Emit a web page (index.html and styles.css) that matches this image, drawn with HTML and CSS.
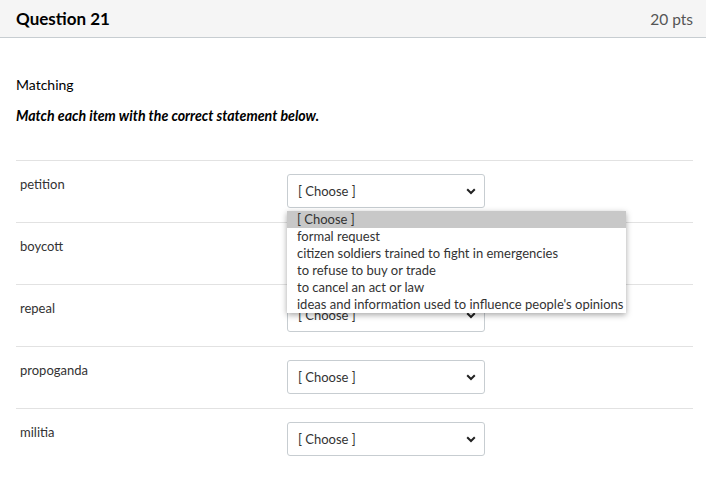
FILE: index.html
```html
<!DOCTYPE html>
<html>
<head>
<meta charset="utf-8">
<link rel="stylesheet" href="styles.css">
</head>
<body>
<div class="header">
  <h2 class="title">Question 21</h2>
  <span class="pts">20 pts</span>
</div>
<div class="content">
  <p class="kind">Matching</p>
  <p class="instr">Match each item with the correct statement below.</p>
  <div class="rows">
    <div class="row">
      <div class="label">petition</div>
      <div class="selwrap">
        <div class="select"><span>[ Choose ]</span><svg class="chev" width="10" height="7" viewBox="0 0 10 7"><path d="M1.2 1.3 L5 5 L8.8 1.3" fill="none" stroke="#222" stroke-width="2"/></svg></div>
        <ul class="menu">
          <li class="hl">[ Choose ]</li>
          <li>formal request</li>
          <li>citizen soldiers trained to fight in emergencies</li>
          <li>to refuse to buy or trade</li>
          <li>to cancel an act or law</li>
          <li>ideas and information used to influence people's opinions</li>
        </ul>
      </div>
    </div>
    <div class="row">
      <div class="label">boycott</div>
      <div class="selwrap">
        <div class="select"><span>[ Choose ]</span><svg class="chev" width="10" height="7" viewBox="0 0 10 7"><path d="M1.2 1.3 L5 5 L8.8 1.3" fill="none" stroke="#222" stroke-width="2"/></svg></div>
      </div>
    </div>
    <div class="row">
      <div class="label">repeal</div>
      <div class="selwrap">
        <div class="select"><span>[ Choose ]</span><svg class="chev" width="10" height="7" viewBox="0 0 10 7"><path d="M1.2 1.3 L5 5 L8.8 1.3" fill="none" stroke="#222" stroke-width="2"/></svg></div>
      </div>
    </div>
    <div class="row">
      <div class="label">propoganda</div>
      <div class="selwrap">
        <div class="select"><span>[ Choose ]</span><svg class="chev" width="10" height="7" viewBox="0 0 10 7"><path d="M1.2 1.3 L5 5 L8.8 1.3" fill="none" stroke="#222" stroke-width="2"/></svg></div>
      </div>
    </div>
    <div class="row">
      <div class="label">militia</div>
      <div class="selwrap">
        <div class="select"><span>[ Choose ]</span><svg class="chev" width="10" height="7" viewBox="0 0 10 7"><path d="M1.2 1.3 L5 5 L8.8 1.3" fill="none" stroke="#222" stroke-width="2"/></svg></div>
      </div>
    </div>
  </div>
</div>
</body>
</html>
```

FILE: styles.css
```css
* { box-sizing: border-box; }
body {
  margin: 0;
  font-family: Lato, "Open Sans", sans-serif;
  color: #2d3b45;
  background: #fff;
}
.header {
  height: 38px;
  background: #f5f5f5;
  border-bottom: 1px solid #c7cdd1;
  display: flex;
  justify-content: space-between;
  align-items: center;
  padding: 0 13px 0 16px;
}
.title {
  margin: 0;
  font-size: 17px;
  font-weight: 700;
  color: #000;
  line-height: 20px;
}
.pts {
  font-size: 15.5px;
  color: #555;
}
.content {
  padding: 0 13px 0 16px;
}
.kind {
  margin: 37px 0 0;
  font-size: 14px;
  line-height: 20px;
  color: #000;
}
.instr {
  margin: 11px 0 0;
  font-size: 14.15px;
  line-height: 20px;
  font-style: italic;
  font-weight: 700;
  color: #000;
}
.rows {
  margin-top: 34px;
}
.row {
  height: 62px;
  border-top: 1px solid #e2e2e2;
  display: grid;
  grid-template-columns: 271px 198px;
  padding-top: 13px;
}
.label {
  padding-left: 4px;
  font-size: 13px;
  line-height: 20px;
  color: #333;
}
.selwrap {
  position: relative;
}
.select {
  height: 34px;
  border: 1px solid #c7cdd1;
  border-radius: 3px;
  background: #fff;
  display: flex;
  align-items: center;
  justify-content: space-between;
  padding: 0 8px 0 10px;
  font-size: 13px;
  color: #333;
}
.chev { display: block; }
.menu {
  position: absolute;
  top: 37px;
  left: 0;
  width: 339px;
  margin: 0;
  padding: 0;
  list-style: none;
  background: #fff;
  box-shadow: 0 2px 6px rgba(0,0,0,0.35);
  z-index: 10;
}
.menu li {
  height: 17px;
  line-height: 17px;
  padding-left: 10px;
  font-size: 13px;
  color: #333;
  white-space: nowrap;
}
.menu li.hl {
  background: #c8c8c8;
}
```
